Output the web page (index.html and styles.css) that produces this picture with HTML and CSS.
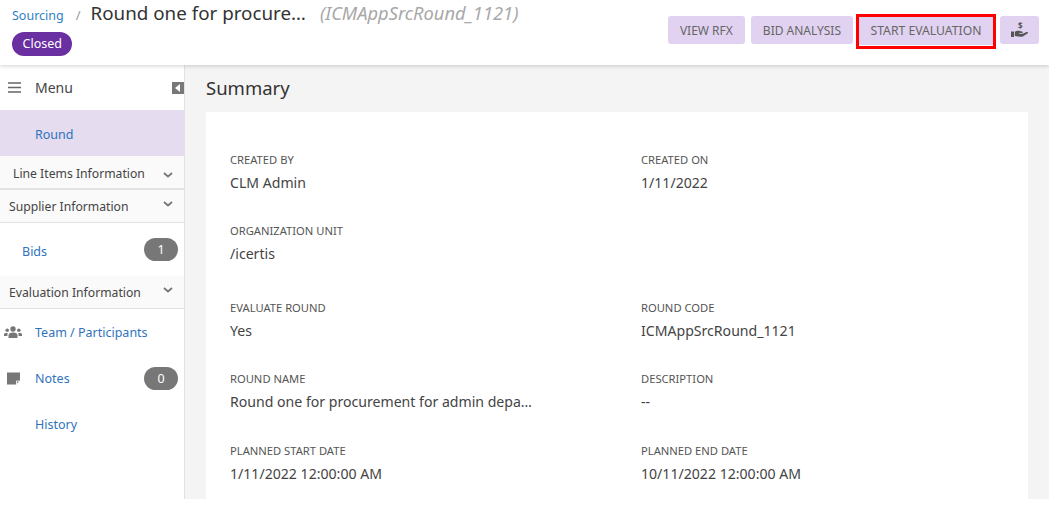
FILE: index.html
```html
<!DOCTYPE html>
<html lang="en">
<head>
    <meta charset="UTF-8">
    <meta name="viewport" content="width=device-width, initial-scale=1.0">
    <title>Round Summary</title>
    <link rel="stylesheet" href="styles.css">
</head>
<body>

<div class="app">
    <header>
        <div class="title-block">
            <div class="crumbs">
                <a href="#" class="crumb-link">Sourcing</a>
                <span class="crumb-sep">/</span>
                <h1>Round one for procure…</h1>
                <span class="code">(ICMAppSrcRound_1121)</span>
            </div>
            <span class="status">Closed</span>
        </div>
        <div class="actions">
            <button class="btn">VIEW RFX</button>
            <button class="btn">BID ANALYSIS</button>
            <span class="highlight"><button class="btn btn-start">START EVALUATION</button></span>
            <button class="btn btn-icon" aria-label="Award">
                <svg width="20" height="20" viewBox="-1 -2 20 20">
                    <text x="7" y="6.500" class="dollar">$</text>
                    <path d="M0 9.500h3V15H0z" fill="#555"/>
                    <path d="M3.800 9.800c1.600-1.100 3.300-1.400 5-.7l2.300.5c1 .3.800 1.500-.2 1.500H8v.6h3.700l3.900-1.700c1.300-.5 2 .8.900 1.500l-4.700 2.900c-.6.400-1.200.5-1.900.4l-6.100-.7z" fill="#555"/>
                </svg>
            </button>
        </div>
    </header>

    <div class="body-row">
        <aside>
            <div class="menu-head">
                <svg class="burger" width="13" height="11" viewBox="0 0 13 11">
                    <path d="M0 1h13M0 5.500h13M0 10h13" stroke="#666" stroke-width="1.600"/>
                </svg>
                <span>Menu</span>
                <span class="collapse"></span>
            </div>
            <a href="#" class="item active">Round</a>
            <div class="group group-line">Line Items Information
                <svg class="chev chev-low" width="10" height="6" viewBox="0 0 10 6"><path d="M1 1l4 3.500L9 1" fill="none" stroke="#777" stroke-width="1.800"/></svg>
            </div>
            <div class="group">Supplier Information
                <svg class="chev" width="10" height="6" viewBox="0 0 10 6"><path d="M1 1l4 3.500L9 1" fill="none" stroke="#777" stroke-width="1.800"/></svg>
            </div>
            <a href="#" class="item item-bids">Bids<span class="count">1</span></a>
            <div class="group">Evaluation Information
                <svg class="chev" width="10" height="6" viewBox="0 0 10 6"><path d="M1 1l4 3.500L9 1" fill="none" stroke="#777" stroke-width="1.800"/></svg>
            </div>
            <a href="#" class="item item-team">
                <svg class="side-icon" width="18" height="13" viewBox="0 0 18 13">
                    <circle cx="9" cy="3" r="2.700" fill="#777"/>
                    <circle cx="3.200" cy="4.200" r="1.800" fill="#777"/>
                    <circle cx="14.800" cy="4.200" r="1.800" fill="#777"/>
                    <path d="M4.500 12V9.500C4.500 7.500 6 6.500 9 6.500s4.500 1 4.500 3V12z" fill="#777"/>
                    <path d="M0 10V8.500C0 7.200 1 6.800 3.800 6.900 3.400 7.600 3.400 9 3.400 10zM18 10V8.500c0-1.300-1-1.700-3.800-1.600.4.700.4 2.100.4 3.100z" fill="#777"/>
                </svg>
                Team / Participants
            </a>
            <a href="#" class="item item-team">
                <svg class="side-icon" width="18" height="13" viewBox="0 0 18 13">
                    <path d="M3 .5h13v8l-4 4H3z" fill="#777"/>
                    <path d="M12.500 12V9H16" fill="none" stroke="#eee" stroke-width="1"/>
                </svg>
                Notes<span class="count">0</span>
            </a>
            <a href="#" class="item item-team item-plain">History</a>
        </aside>

        <main>
            <h2>Summary</h2>
            <section class="card">
                <div class="fields">
                    <div class="field"><label>CREATED BY</label><p>CLM Admin</p></div>
                    <div class="field"><label>CREATED ON</label><p>1/11/2022</p></div>
                    <div class="field field-wide"><label>ORGANIZATION UNIT</label><p>/icertis</p></div>
                    <div class="field"><label>EVALUATE ROUND</label><p>Yes</p></div>
                    <div class="field"><label>ROUND CODE</label><p>ICMAppSrcRound_1121</p></div>
                    <div class="field"><label>ROUND NAME</label><p>Round one for procurement for admin depa…</p></div>
                    <div class="field"><label>DESCRIPTION</label><p>--</p></div>
                    <div class="field"><label>PLANNED START DATE</label><p>1/11/2022 12:00:00 AM</p></div>
                    <div class="field"><label>PLANNED END DATE</label><p>10/11/2022 12:00:00 AM</p></div>
                </div>
            </section>
        </main>
    </div>
</div>

</body>
</html>
```

FILE: styles.css
```css
body {
    font-family: "Noto Sans", Arial, sans-serif;
    margin: 0;
    padding: 0;
    background-color: white;
    color: #3a3a3a;
}

.app {
    width: 1049px;
    height: 499px;
    overflow: hidden;
    display: flex;
    flex-direction: column;
}

a {
    text-decoration: none;
}

header {
    height: 65px;
    flex-shrink: 0;
    display: flex;
    justify-content: space-between;
    background-color: white;
    box-shadow: 0 1px 4px rgba(0, 0, 0, 0.18);
    position: relative;
    z-index: 1;
}

.title-block {
    padding-left: 12px;
}

.crumbs {
    display: flex;
    align-items: baseline;
    height: 31px;
    white-space: nowrap;
}

.crumb-link {
    color: #2f7fc4;
    font-size: 12.500px;
}

.crumb-sep {
    color: #999;
    font-size: 13px;
    margin: 0 10px 0 12px;
}

h1 {
    margin: 0;
    font-size: 18.800px;
    font-weight: 400;
    line-height: 26px;
    color: #333;
}

.code {
    margin-left: 14px;
    font-size: 18.300px;
    font-style: italic;
    color: #a8a8a8;
}

.status {
    display: inline-block;
    background-color: #6a2fa0;
    color: white;
    font-size: 12.500px;
    line-height: 24px;
    height: 24px;
    padding: 0 10.500px;
    border-radius: 12px;
}

.actions {
    display: flex;
    align-items: flex-start;
    gap: 6px;
    padding: 16px 10px 0 0;
}

.btn {
    height: 28px;
    border: none;
    border-radius: 3px;
    background-color: #e0d2f0;
    color: #666;
    font-family: inherit;
    font-size: 12px;
    padding: 0 12px;
}

.highlight {
    display: block;
    box-sizing: border-box;
    width: 140px;
    height: 35px;
    margin: -2px -2px 0 -3px;
    border: 3px solid #f00;
}

.btn-start {
    width: 134px;
    padding: 0 0 2px;
    border-radius: 0;
    font-size: 12.200px;
}

.btn-icon {
    width: 39px;
    padding: 0;
    display: flex;
    align-items: center;
    justify-content: center;
}

.dollar {
    font-family: "Noto Sans", sans-serif;
    font-size: 8px;
    font-weight: 700;
    fill: #555;
}

.body-row {
    flex: 1;
    display: flex;
    min-height: 0;
}

aside {
    width: 184px;
    flex-shrink: 0;
    background-color: white;
    border-right: 1px solid #e2e2e2;
    font-size: 12.500px;
}

.menu-head {
    height: 45px;
    display: flex;
    align-items: center;
    padding-left: 8px;
    color: #444;
    font-size: 14px;
}

.burger {
    margin-right: 14px;
}

.collapse {
    margin-left: auto;
    width: 12px;
    height: 12px;
    background-color: #777;
    position: relative;
}

.collapse::after {
    content: "";
    position: absolute;
    left: 3px;
    top: 2px;
    border-style: solid;
    border-width: 4px 5px 4px 0;
    border-color: transparent white transparent transparent;
}

.item {
    display: flex;
    align-items: center;
    box-sizing: border-box;
    color: #2f73bd;
    height: 46px;
}

.item.active {
    background-color: #e5dcef;
    padding: 2px 0 0 35px;
}

.group {
    display: flex;
    align-items: center;
    justify-content: space-between;
    box-sizing: border-box;
    height: 33px;
    padding: 1px 11px 0 9px;
    background-color: #fafafa;
    border-bottom: 1px solid #e2e2e2;
    color: #444;
    font-size: 12.200px;
}

.group-line {
    height: 34px;
    padding: 2px 11px 0 13px;
    border-bottom-width: 2px;
}

.chev {
    margin-bottom: 6px;
}

.chev-low {
    margin: 3px 0 0;
}

.item-bids {
    height: 53px;
    padding: 3px 6px 0 22px;
}

.item-bids .count {
    margin-top: -3px;
}

.item-team {
    padding-left: 4px;
    padding-right: 6px;
}

.item-plain {
    padding-left: 35px;
}

.side-icon {
    margin-right: 13px;
}

.count {
    margin-left: auto;
    width: 34px;
    height: 23px;
    border-radius: 12px;
    background-color: #777;
    color: white;
    text-align: center;
    line-height: 23px;
    font-size: 12.500px;
}

main {
    flex: 1;
    background-color: #f4f4f4;
    padding: 0 21px;
    min-width: 0;
}

h2 {
    margin: 0;
    height: 47px;
    line-height: 46px;
    font-size: 18.500px;
    font-weight: 400;
    color: #333;
}

.card {
    background-color: white;
    height: 400px;
    padding: 39px 24px 0;
}

.fields {
    display: grid;
    grid-template-columns: 411px 1fr;
    grid-template-rows: 71px 77px 71px 72px;
}

.field label {
    display: block;
    font-size: 11.200px;
    line-height: 18px;
    color: #555;
}

.field p {
    margin: 3px 0 0;
    font-size: 14.100px;
    line-height: 22px;
    color: #444;
    white-space: nowrap;
}

.field-wide {
    grid-column: 1 / -1;
}
```
